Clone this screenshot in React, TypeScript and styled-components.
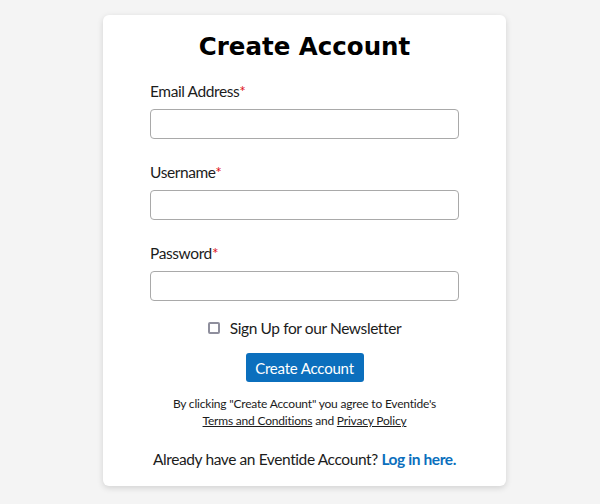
import React from 'react'
import styled, { createGlobalStyle } from 'styled-components'

const GlobalStyle = createGlobalStyle`
  body {
    margin: 0;
    background: #f4f4f4;
    font-family: Lato, "Open Sans", sans-serif;
    color: #1c1c1c;
  }
`

const Page = styled.div`
  display: flex;
  justify-content: center;
  padding: 15px 0 0 9px;
  height: 504px;
  box-sizing: border-box;
`

const Card = styled.form`
  width: 403px;
  height: 471px;
  box-sizing: border-box;
  background: #fff;
  border-radius: 6px;
  box-shadow: 0 2px 6px rgba(0, 0, 0, 0.14);
  padding: 16px 47px 0;
  display: flex;
  flex-direction: column;
`

const Title = styled.h1`
  margin: 0 0 16px;
  text-align: center;
  font-family: "DejaVu Sans", sans-serif;
  font-weight: 700;
  font-size: 24.5px;
  line-height: 32px;
  color: #000;
`

const Fields = styled.div`
  display: flex;
  flex-direction: column;
  gap: 21px;
`

const Field = styled.div`
  display: flex;
  flex-direction: column;
`

const Label = styled.label`
  font-size: 15.5px;
  letter-spacing: -0.4px;
  line-height: 24px;
  margin-bottom: 6px;
`

const Required = styled.span`
  color: #e0141e;
`

const Input = styled.input`
  height: 30px;
  box-sizing: border-box;
  border: 1px solid #a9a9a9;
  border-radius: 4px;
  font-size: 15px;
  padding: 0 8px;
  outline: none;
`

const CheckRow = styled.label`
  display: flex;
  align-items: center;
  justify-content: center;
  gap: 10px;
  font-size: 15.5px;
  letter-spacing: -0.4px;
  line-height: 24px;
  margin-top: 15px;
`

const Box = styled.span`
  width: 12px;
  height: 12px;
  box-sizing: border-box;
  border: 2px solid #8f8f9d;
  border-radius: 2px;
`

const Submit = styled.button`
  align-self: center;
  margin-top: 13px;
  width: 118px;
  height: 29px;
  border: none;
  border-radius: 3px;
  background: #0b6fbd;
  color: #fff;
  font-family: Lato, "Open Sans", sans-serif;
  font-size: 15px;
  letter-spacing: -0.2px;
`

const Terms = styled.p`
  margin: 13px 0 0;
  text-align: center;
  font-size: 12px;
  letter-spacing: -0.2px;
  line-height: 17px;
`

const Underlined = styled.a`
  color: inherit;
  text-decoration: underline;
`

const LoginLine = styled.p`
  margin: 18px 0 0;
  text-align: center;
  font-size: 15.5px;
  letter-spacing: -0.4px;
  line-height: 24px;
`

const LoginLink = styled.a`
  color: #0b6fbd;
  font-weight: 700;
  text-decoration: none;
`

const fields = ['Email Address', 'Username', 'Password']

const App = () => {
  return (
    <>
      <GlobalStyle />
      <Page>
        <Card onSubmit={e => e.preventDefault()}>
          <Title>Create Account</Title>
          <Fields>
            {fields.map(name => (
              <Field key={name}>
                <Label>
                  {name}
                  <Required>*</Required>
                </Label>
                <Input type={name === 'Password' ? 'password' : 'text'} />
              </Field>
            ))}
          </Fields>
          <CheckRow>
            <Box />
            Sign Up for our Newsletter
          </CheckRow>
          <Submit type="submit">Create Account</Submit>
          <Terms>
            By clicking "Create Account" you agree to Eventide's
            <br />
            <Underlined href="#">Terms and Conditions</Underlined> and{' '}
            <Underlined href="#">Privacy Policy</Underlined>
          </Terms>
          <LoginLine>
            Already have an Eventide Account? <LoginLink href="#">Log in here.</LoginLink>
          </LoginLine>
        </Card>
      </Page>
    </>
  )
}

export default App
